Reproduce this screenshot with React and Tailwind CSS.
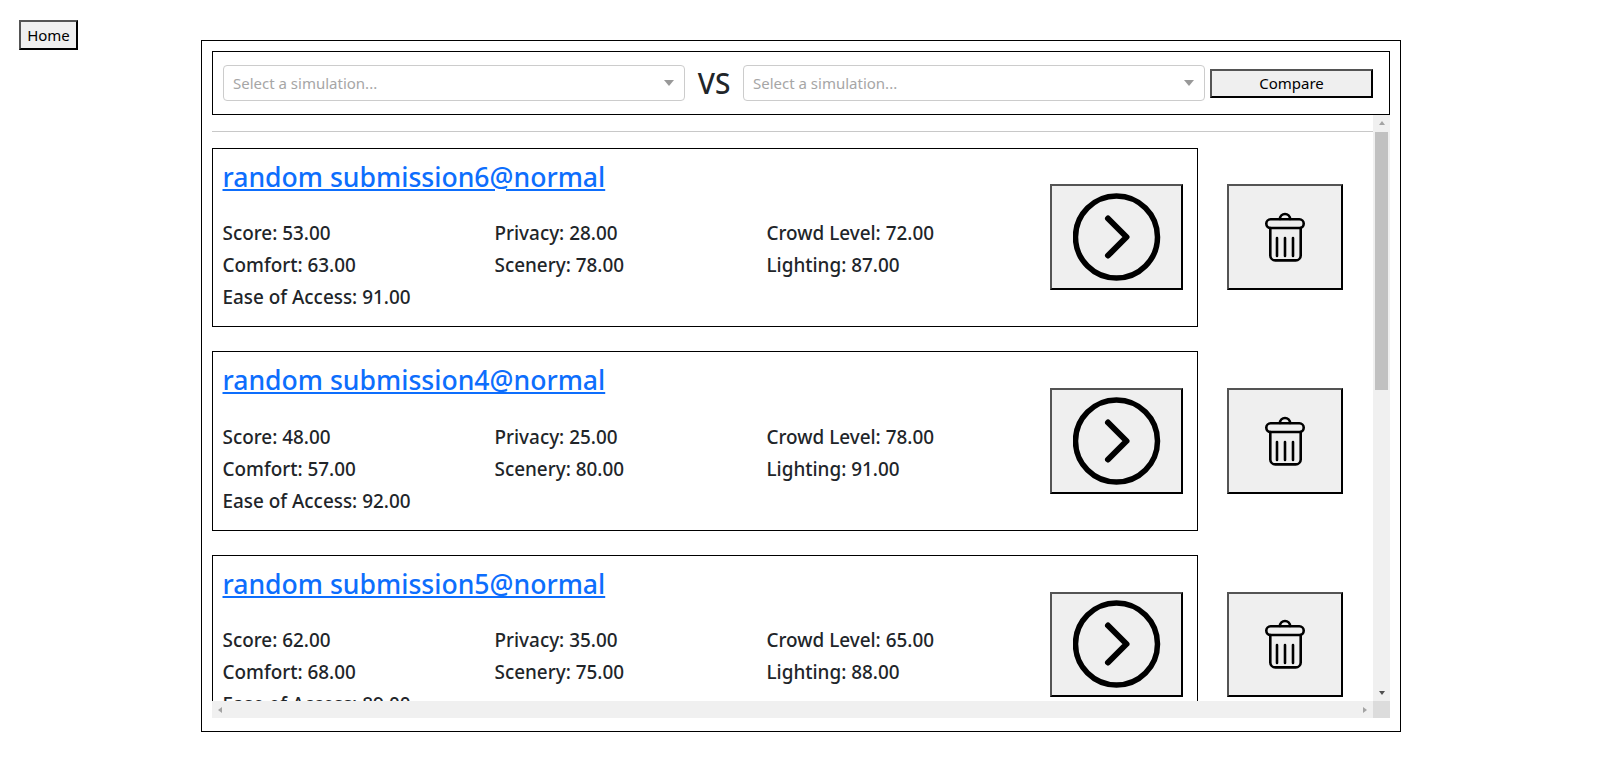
const sims = [
  { name: "random submission6@normal", score: "53.00", privacy: "28.00", crowd: "72.00", comfort: "63.00", scenery: "78.00", lighting: "87.00", access: "91.00" },
  { name: "random submission4@normal", score: "48.00", privacy: "25.00", crowd: "78.00", comfort: "57.00", scenery: "80.00", lighting: "91.00", access: "92.00" },
  { name: "random submission5@normal", score: "62.00", privacy: "35.00", crowd: "65.00", comfort: "68.00", scenery: "75.00", lighting: "88.00", access: "89.00" },
];

const GoIcon = () => (
  <svg width="88" height="88" viewBox="0 0 88 88" fill="none" stroke="#000" strokeLinecap="round" strokeLinejoin="round">
    <circle cx="43.5" cy="44" r="41" strokeWidth="5.5" />
    <path d="M35 25.5 53.5 44 35 62.5" strokeWidth="6" />
  </svg>
);

const TrashIcon = () => (
  <svg width="42" height="52" viewBox="0 0 42 52" fill="none" stroke="#000" strokeWidth="2.6" strokeLinecap="round" strokeLinejoin="round">
    <path d="M16 8a5 5 0 0 1 10 0" />
    <rect x="2.3" y="8.3" width="37.4" height="8.7" rx="4.3" />
    <path d="M6.3 17v27.4a5 5 0 0 0 5 5h20.4a5 5 0 0 0 5-5V17" />
    <path d="M13 27v18M21 27v18M29 27v18" />
  </svg>
);

const SimSelect = () => (
  <div className="flex h-[36px] w-[462px] items-center rounded border border-[#ccc] bg-white pr-[10px] pl-[9px]">
    <span className="flex-1 pt-[1px] text-[15px] text-[#a6a6a6]">Select a simulation...</span>
    <span className="h-0 w-0 border-x-[5.5px] border-t-[6px] border-x-transparent border-t-[#999]" />
  </div>
);

const SimRow = ({ sim }) => (
  <div className="mb-[24px] flex h-[179.6px]">
    <div className="flex h-full w-[986px] shrink-0 border border-black">
      <div className="flex-1 pl-[9.5px]">
        <a href="#" className="mt-[10px] block text-[26.6px] leading-[36px] font-medium text-[#0d6efd] underline">
          {sim.name}
        </a>
        <div className="mt-[22.6px] grid grid-cols-[272px_272px_272px] text-[18.9px] leading-[32px] font-medium text-[#212529]">
          <p>Score: {sim.score}</p>
          <p>Privacy: {sim.privacy}</p>
          <p>Crowd Level: {sim.crowd}</p>
          <p>Comfort: {sim.comfort}</p>
          <p>Scenery: {sim.scenery}</p>
          <p>Lighting: {sim.lighting}</p>
          <p>Ease of Access: {sim.access}</p>
        </div>
      </div>
      <button className="mt-[35.7px] mr-[14px] flex h-[105.6px] w-[133px] items-center justify-center border-2 border-black bg-[#efefef] [border-style:outset]">
        <GoIcon />
      </button>
    </div>
    <button className="mt-[36.7px] ml-[29px] flex h-[105.6px] w-[116px] shrink-0 items-center justify-center border-2 border-black bg-[#efefef] [border-style:outset]">
      <TrashIcon />
    </button>
  </div>
);

export default function App() {
  return (
    <div className="h-[769px] overflow-hidden bg-white font-['Noto_Sans',sans-serif] text-[#212529]">
      <div className="pt-[20px] pl-[19px]">
        <button className="h-[30px] w-[59px] border-2 border-black bg-[#efefef] text-[15px] text-black [border-style:outset]">
          Home
        </button>
      </div>

      <div className="mt-[-10px] ml-[201px] flex h-[692px] w-[1200px] flex-col border border-black px-[10px] pt-[10px]">
        {/* filtro */}
        <div className="flex h-[64px] shrink-0 items-center border border-black pl-[10px]">
          <SimSelect />
          <span className="w-[58px] text-center text-[28px] font-medium">VS</span>
          <SimSelect />
          <button className="ml-[5px] h-[29px] w-[163px] border-2 border-black bg-[#efefef] text-[15px] text-black [border-style:outset]">
            Compare
          </button>
        </div>

        {/* lista con sus barras */}
        <div className="grid h-[603px] w-[1178px] grid-cols-[1161px_17px] grid-rows-[586px_17px]">
          <div className="overflow-hidden">
            <hr className="mt-[16px] mb-[15.7px] border-t border-[#c8c8c8]" />
            {sims.map((sim) => (
              <SimRow key={sim.name} sim={sim} />
            ))}
          </div>

          <div className="flex flex-col items-center bg-[#f0f0f0]">
            <span className="mt-[6px] h-0 w-0 border-x-[3.5px] border-b-[4px] border-x-transparent border-b-[#a3a3a3]" />
            <div className="mt-[7px] h-[258px] w-[13px] bg-[#c1c1c1]" />
            <span className="mt-auto mb-[6px] h-0 w-0 border-x-[3.5px] border-t-[4px] border-x-transparent border-t-[#505050]" />
          </div>

          <div className="flex items-center justify-between bg-[#f0f0f0] px-[6px]">
            <span className="h-0 w-0 border-y-[3.5px] border-r-[4px] border-y-transparent border-r-[#a3a3a3]" />
            <span className="h-0 w-0 border-y-[3.5px] border-l-[4px] border-y-transparent border-l-[#a3a3a3]" />
          </div>
          <div className="bg-[#dcdcdc]" />
        </div>
      </div>
    </div>
  );
}
